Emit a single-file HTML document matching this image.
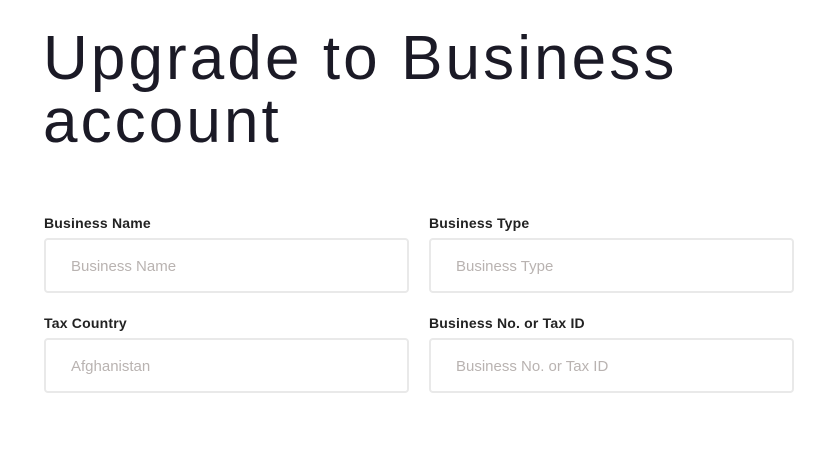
<!DOCTYPE html>
<html><head><style>
html,body{margin:0;padding:0;background:#fff;width:823px;height:461px;overflow:hidden}
body{font-family:"Liberation Sans",sans-serif;position:relative}
h1{position:absolute;left:43px;top:27px;margin:0;font-size:62px;line-height:63px;font-weight:400;color:#1b1a26;letter-spacing:3.1px}
.l{position:absolute;font-size:14px;font-weight:700;color:#222;letter-spacing:0.2px}
.b{position:absolute;width:361px;height:51px;border:2px solid #e9e9e9;border-radius:4px;box-sizing:content-box}
.b span{position:absolute;left:25px;top:18px;font-size:15px;color:#b9b3b1}
</style></head><body>
<h1>Upgrade to Business<br>account</h1>
<div class="l" style="left:44px;top:215px">Business Name</div>
<div class="l" style="left:429px;top:215px">Business Type</div>
<div class="b" style="left:44px;top:238px"><span>Business Name</span></div>
<div class="b" style="left:429px;top:238px"><span>Business Type</span></div>
<div class="l" style="left:44px;top:315px">Tax Country</div>
<div class="l" style="left:429px;top:315px">Business No. or Tax ID</div>
<div class="b" style="left:44px;top:338px"><span>Afghanistan</span></div>
<div class="b" style="left:429px;top:338px"><span>Business No. or Tax ID</span></div>
</body></html>
